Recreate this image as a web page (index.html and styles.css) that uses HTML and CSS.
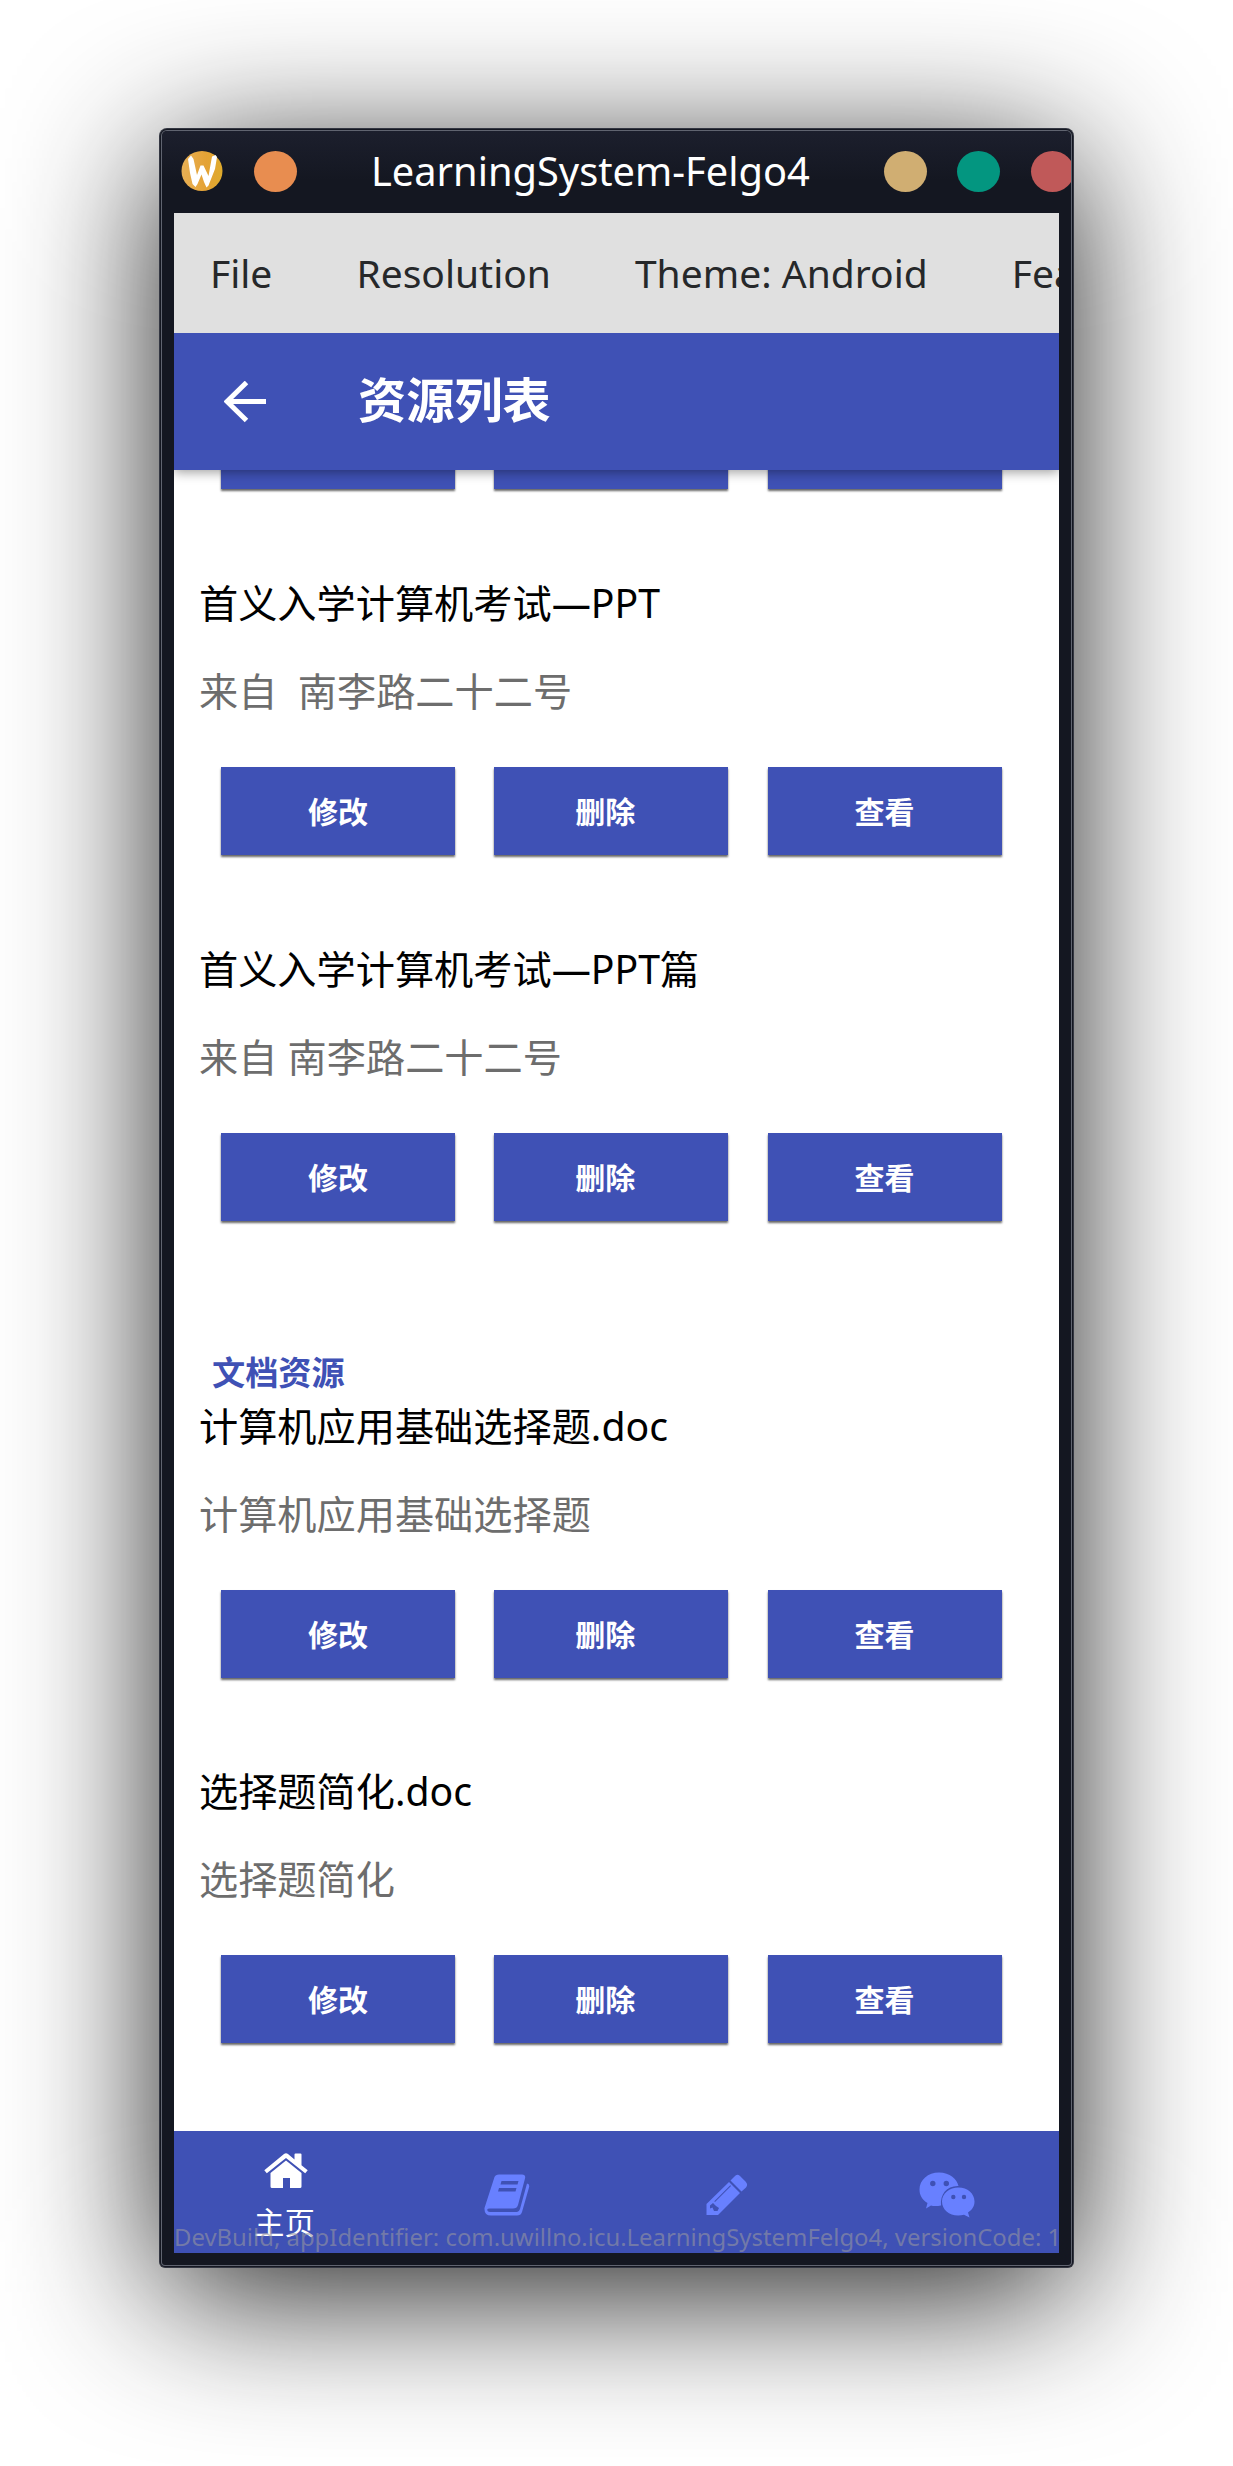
FILE: index.html
```html
<!DOCTYPE html>
<html lang="zh-CN">
<head>
<meta charset="utf-8">
<title>LearningSystem-Felgo4</title>
<link rel="stylesheet" href="styles.css">
</head>
<body>
<div class="window">
  <header class="titlebar">
    <svg class="app-icon" width="42" height="40" viewBox="0 0 42 40">
      <defs><linearGradient id="gold" x1="0" x2="1"><stop offset="0" stop-color="#e8b055"/><stop offset=".6" stop-color="#e4a235"/><stop offset="1" stop-color="#dfab2c"/></linearGradient></defs>
      <ellipse cx="21" cy="20" rx="20.5" ry="20" fill="url(#gold)"/>
      <path d="M7 8 10 4.500 12.500 8 16 24 19.500 14.500 22.500 14.500 27.500 25 31 5.500 34.500 4 36 6 34 18 27.500 34.500 25.500 36.500 23 31 20.500 23.500 16.500 33 14.500 36 11.500 33 9 22Z" fill="#fff"/>
    </svg>
    <i class="dot pin"></i>
    <h1 class="window-title">LearningSystem-Felgo4</h1>
    <i class="dot minimize"></i>
    <i class="dot maximize"></i>
    <i class="dot close"></i>
  </header>
  <div class="client">
    <nav class="menu"><span>File</span><span>Resolution</span><span>Theme: Android</span><span>Features</span></nav>
    <div class="navbar">
      <svg width="42" height="42" viewBox="0 0 42 42"><path d="M42 20.5H4M22.5 1.5 3 20.5 22.5 39.5" fill="none" stroke="#fff" stroke-width="5"/></svg>
      <h2>资源列表</h2>
    </div>
    <main class="list">
      <section class="item partial">
        <div class="actions"><button></button><button></button><button></button></div>
      </section>
      <section class="item">
        <p class="name">首义入学计算机考试—PPT</p>
        <p class="detail">来自&nbsp; 南李路二十二号</p>
        <div class="actions"><button>修改</button><button class="remove">删除</button><button>查看</button></div>
      </section>
      <section class="item">
        <p class="name">首义入学计算机考试—PPT篇</p>
        <p class="detail">来自 南李路二十二号</p>
        <div class="actions"><button>修改</button><button class="remove">删除</button><button>查看</button></div>
      </section>
      <h3 class="section">文档资源</h3>
      <section class="item first">
        <p class="name">计算机应用基础选择题.doc</p>
        <p class="detail">计算机应用基础选择题</p>
        <div class="actions"><button>修改</button><button class="remove">删除</button><button>查看</button></div>
      </section>
      <section class="item">
        <p class="name">选择题简化.doc</p>
        <p class="detail">选择题简化</p>
        <div class="actions"><button>修改</button><button class="remove">删除</button><button>查看</button></div>
      </section>
    </main>
    <footer class="tabs">
      <div class="tab active">
        <svg width="44" height="36" viewBox="0 0 44 36"><path d="M22 7.5 37.5 20V33.5Q37.5 35 36 35H26V25H19V35H8Q6.500 35 6.500 33.500V20Z"/><path d="M22 .3Q23 .3 24 1.100L30.500 6.400V1.500Q30.500.5 31.500.5H36.500Q37.500.5 37.500 1.500V12.300L43.700 17.300 41.200 20.300 22 4.900 2.800 20.300.3 17.300 20 1.100Q21 .3 22 .3Z"/></svg>
        <span>主页</span>
      </div>
      <div class="tab">
        <svg width="46" height="42" viewBox="0 0 46 42"><path fill-rule="evenodd" d="M15 .5H38Q42 .5 41 4.500L34 31Q33 34.500 29 34.500H6Q3 34.500 3.200 36 3.500 38 6 38H33Q35 38 36 35L43 9.500Q46 10 45 13.500L38 38Q37 41.500 33 41.500H7Q0 41.500 .5 34L10.500 3Q11.500.5 15 .5ZM17.500 7 16.500 10.500H33.500L34.500 7ZM15 14 14 17.500H31.500L32.500 14Z"/></svg>
      </div>
      <div class="tab">
        <svg width="42" height="42" viewBox="0 0 42 42"><path fill-rule="evenodd" d="M28.500 2.500Q31-.5 34 2L39.500 7.500Q42.500 10.500 40 13.500L35.500 17.500 24.500 6.500ZM23 8 34 19 12 41H.5V30ZM4 31.500V34.500L6.500 33.500 8 37H11.500L13 34 10 32 7 29ZM9 28 25 12 24.300 11.300 8.300 27.300Z"/></svg>
      </div>
      <div class="tab">
        <svg width="56" height="46" viewBox="0 0 56 46"><path fill-rule="evenodd" d="M20 .5C31 .5 38 7 39.500 14 28 13.500 21 22 22 33.500 17 34.500 14 34 12 33.500L7 36.500 8.500 31C3 27.500.5 23 .5 17.500.5 8 9 .5 20 .5ZM16.500 11.500A2.700 2.700 0 1 0 11.100 11.500 2.700 2.700 0 1 0 16.500 11.500ZM30 11.500A2.700 2.700 0 1 0 24.600 11.500 2.700 2.700 0 1 0 30 11.500ZM39.500 15.500C48.500 15.500 55.500 21.500 55.500 29.500 55.500 34 53.500 37.500 49 40.500L50.500 45.500 45 42.800C33 46 23 39 23 29.500 23 21.500 30.500 15.500 39.500 15.500ZM36.500 25A2.200 2.200 0 1 0 32.100 25 2.200 2.200 0 1 0 36.500 25ZM47.200 25A2.200 2.200 0 1 0 42.800 25 2.200 2.200 0 1 0 47.200 25Z"/></svg>
      </div>
      <div class="build-info">DevBuild, appIdentifier: com.uwillno.icu.LearningSystemFelgo4, versionCode: 1</div>
    </footer>
  </div>
</div>
</body>
</html>
```
FILE: styles.css
```css
* { box-sizing: border-box; }
body {
  margin: 0;
  height: 2466px;
  padding: 131px 0 0 162px;
  overflow: hidden;
  background: #fff;
  font-family: "Noto Sans", "Noto Sans CJK SC", sans-serif;
}
h1, h2, h3, p { margin: 0; }
.window {
  width: 909px;
  height: 2134px;
  border-radius: 5px 5px 3px 3px;
  background: #141721;
  box-shadow: 0 0 0 1px #606470, 0 0 0 2px #141721, 0 0 0 3px #343742,
    0 27px 150px rgba(0, 0, 0, .9);
}
.titlebar {
  display: flex;
  align-items: center;
  height: 82px;
  padding: 0 0 2px 19px;
  overflow: hidden;
  border-radius: 5px 5px 0 0;
  background: linear-gradient(#1c1f2d, #141721 60%);
}
.app-icon, .dot { flex: none; }
.dot { width: 43px; height: 41px; border-radius: 50%; }
.pin { margin-left: 31px; background: #e88d50; }
.minimize { background: #d0ae72; }
.maximize { margin-left: 30px; background: #039680; }
.close { margin-left: 31px; background: #c05959; }
.window-title {
  flex: none;
  width: 513px;
  margin-left: 74px;
  color: #fff;
  font-size: 39.8px;
  font-weight: 400;
  line-height: 80px;
}
.client {
  display: flex;
  flex-direction: column;
  width: 885px;
  height: 2040px;
  margin-left: 12px;
  overflow: hidden;
  background: #fff;
}
.menu {
  flex: none;
  position: relative;
  z-index: 2;
  display: flex;
  gap: 84px;
  height: 120px;
  padding-left: 36px;
  overflow: hidden;
  background: #e0e0e0;
  color: #26282a;
  font-size: 39px;
  line-height: 120px;
  white-space: nowrap;
}
.navbar {
  flex: none;
  position: relative;
  z-index: 1;
  display: flex;
  align-items: center;
  height: 137px;
  padding-left: 50px;
  background: #3f51b5;
  box-shadow: 0 2px 11px rgba(0, 0, 0, .4);
}
.navbar h2 {
  margin-left: 92px;
  padding-bottom: 5px;
  color: #fff;
  font-size: 48.2px;
  line-height: 70px;
}
.list { flex: none; height: 1661px; overflow: hidden; }
.item { height: 366.3px; padding-top: 60.8px; }
.item.partial { height: 111px; margin-top: -69px; padding: 0; }
.name, .detail {
  height: 88px;
  padding-left: 25px;
  font-size: 39.2px;
  line-height: 60px;
  white-space: pre;
}
.name { color: #000; }
.detail { color: #6d6d6d; }
.actions { display: flex; gap: 39.3px; padding-left: 47px; }
.item:not(.partial) .actions { margin-top: 18.2px; }
button {
  width: 234px;
  height: 88px;
  padding: 2px 0 0;
  border: 0;
  background: #3f51b5;
  box-shadow: 0 2px 2px rgba(0, 0, 0, .6);
  color: #fff;
  font: 700 30px/86px "Noto Sans", "Noto Sans CJK SC", sans-serif;
}
.remove { padding-right: 12px; }
.section {
  height: 46px;
  margin-top: 105px;
  padding-left: 38px;
  color: #3f51b5;
  font-size: 33.2px;
  line-height: 46px;
}
.item.first { height: 304.8px; padding-top: 0; }
.tabs {
  position: relative;
  flex: none;
  display: grid;
  grid-template-columns: 223px 220px 219px 221px;
  height: 122px;
  background: #3f51b5;
}
.tab { display: flex; justify-content: center; align-items: center; padding-top: 6px; fill: #6880ff; }
.tab svg { display: block; }
.active {
  flex-direction: column;
  justify-content: flex-start;
  padding-top: 22px;
  fill: #fff;
  color: #fff;
  font-size: 30.4px;
  line-height: 40px;
}
.active span { margin: 14px 2px 0 0; }
.build-info {
  position: absolute;
  left: 0;
  bottom: 0;
  color: rgba(150, 150, 160, .6);
  font-size: 23.9px;
  line-height: 32px;
  white-space: nowrap;
}
```
